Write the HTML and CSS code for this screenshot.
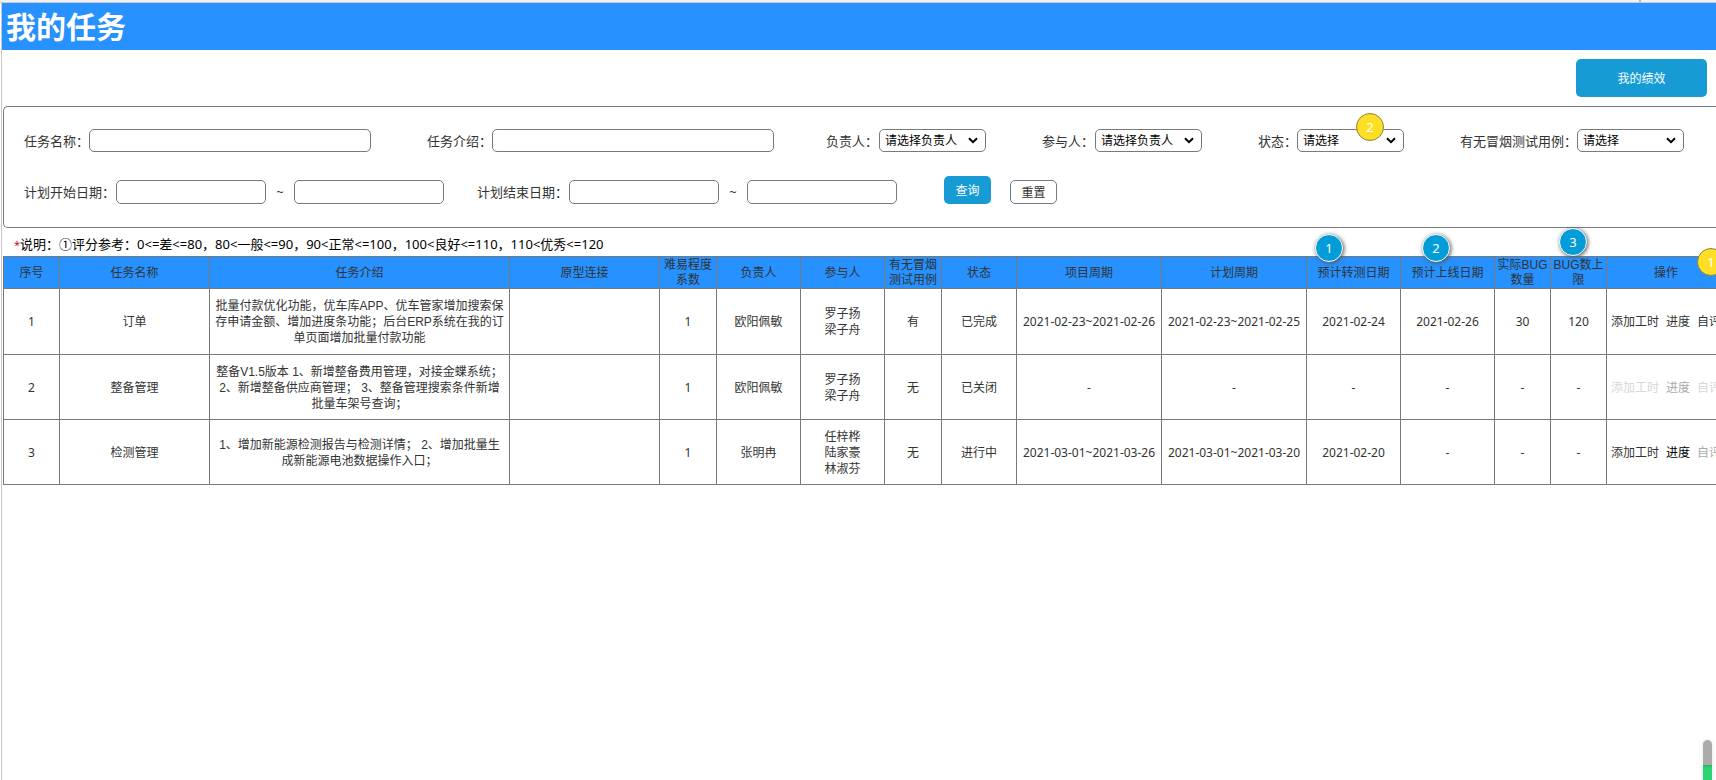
FILE: index.html
```html
<!DOCTYPE html>
<html lang="zh-CN">
<head>
<meta charset="utf-8">
<title>我的任务</title>
<link rel="stylesheet" href="styles.css">
</head>
<body>
<div class="top-strip"><span class="top-mark"></span></div>
<div class="page">
  <header class="page-header"><h1 class="page-title">我的任务</h1></header>
  <div class="toolbar"><button class="btn btn-large" type="button">我的绩效</button></div>

  <form class="filters">
    <div class="filter-row">
      <div class="filter-group">
        <div class="field"><label for="name">任务名称：</label><input class="input input-wide" id="name" type="text"></div>
        <div class="field"><label for="intro">任务介绍：</label><input class="input input-wide" id="intro" type="text"></div>
      </div>
      <div class="filter-group">
        <div class="field field-spaced"><label for="owner">负责人：</label><select class="select" id="owner"><option>请选择负责人</option></select></div>
        <div class="field field-spaced"><label for="member">参与人：</label><select class="select" id="member"><option>请选择负责人</option></select></div>
        <div class="field"><label for="state">状态：</label><select class="select" id="state"><option>请选择</option></select><span class="badge badge-yellow badge-state">2</span></div>
        <div class="field"><label for="smoke">有无冒烟测试用例：</label><select class="select" id="smoke"><option>请选择</option></select></div>
      </div>
    </div>
    <div class="filter-row filter-row-dates">
      <div class="field field-spaced"><label for="start-from">计划开始日期：</label><input class="input input-date" id="start-from" type="text"><span class="tilde">~</span><input class="input input-date" type="text" aria-label="计划开始日期止"></div>
      <div class="field field-spaced"><label for="end-from">计划结束日期：</label><input class="input input-date" id="end-from" type="text"><span class="tilde">~</span><input class="input input-date" type="text" aria-label="计划结束日期止"></div>
      <div class="filter-actions">
        <button class="btn btn-small" type="button">查询</button>
        <button class="btn btn-plain" type="reset">重置</button>
      </div>
    </div>
  </form>

  <p class="note"><span class="star">*</span>说明：①评分参考：0&lt;=差&lt;=80，80&lt;一般&lt;=90，90&lt;正常&lt;=100，100&lt;良好&lt;=110，110&lt;优秀&lt;=120</p>

  <table class="tasks">
    <colgroup>
      <col class="c-num"><col class="c-name"><col class="c-intro"><col class="c-name"><col class="c-short"><col class="c-person"><col class="c-person"><col class="c-short"><col class="c-state"><col class="c-period"><col class="c-period"><col class="c-date"><col class="c-date"><col class="c-num"><col class="c-num"><col class="c-ops">
    </colgroup>
    <thead>
      <tr>
        <th>序号</th><th>任务名称</th><th>任务介绍</th><th>原型连接</th><th>难易程度<br>系数</th><th>负责人</th><th>参与人</th><th>有无冒烟<br>测试用例</th><th>状态</th><th>项目周期</th><th>计划周期</th>
        <th>预计转测日期<span class="badge badge-blue badge-test">1</span></th>
        <th>预计上线日期<span class="badge badge-blue badge-online">2</span></th>
        <th>实际BUG<br>数量</th>
        <th>BUG数上<br>限<span class="badge badge-blue badge-limit">3</span></th>
        <th>操作<span class="badge badge-yellow badge-ops">1</span></th>
      </tr>
    </thead>
    <tbody>
      <tr>
        <td>1</td><td>订单</td><td class="intro">批量付款优化功能，优车库APP、优车管家增加搜索保<br>存申请金额、增加进度条功能；后台ERP系统在我的订<br>单页面增加批量付款功能</td><td></td><td>1</td><td>欧阳佩敏</td><td>罗子扬<br>梁子舟</td><td>有</td><td>已完成</td><td>2021-02-23~2021-02-26</td><td>2021-02-23~2021-02-25</td><td>2021-02-24</td><td>2021-02-26</td><td>30</td><td>120</td>
        <td><div class="ops"><a href="#">添加工时</a><a href="#">进度</a><a href="#">自评</a></div></td>
      </tr>
      <tr>
        <td>2</td><td>整备管理</td><td class="intro">整备V1.5版本 1、新增整备费用管理，对接金蝶系统；<br>2、新增整备供应商管理； 3、整备管理搜索条件新增<br>批量车架号查询；</td><td></td><td>1</td><td>欧阳佩敏</td><td>罗子扬<br>梁子舟</td><td>无</td><td>已关闭</td><td>-</td><td>-</td><td>-</td><td>-</td><td>-</td><td>-</td>
        <td><div class="ops"><a class="faint" href="#">添加工时</a><a class="muted" href="#">进度</a><a class="faint" href="#">自评</a></div></td>
      </tr>
      <tr>
        <td>3</td><td>检测管理</td><td class="intro">1、增加新能源检测报告与检测详情； 2、增加批量生<br>成新能源电池数据操作入口；</td><td></td><td>1</td><td>张明冉</td><td>任梓桦<br>陆家豪<br>林淑芬</td><td>无</td><td>进行中</td><td>2021-03-01~2021-03-26</td><td>2021-03-01~2021-03-20</td><td>2021-02-20</td><td>-</td><td>-</td><td>-</td>
        <td><div class="ops"><a href="#">添加工时</a><a class="strong" href="#">进度</a><a class="muted" href="#">自评</a></div></td>
      </tr>
    </tbody>
  </table>
</div>
<div class="scroll-thumb"></div>
</body>
</html>
```

FILE: styles.css
```css
* { box-sizing: border-box; }

body {
  margin: 0;
  min-height: 100vh;
  display: flex;
  flex-direction: column;
  position: relative;
  overflow: hidden;
  background: #fff;
  color: #333;
  font-family: "Noto Sans", "Noto Sans CJK SC", sans-serif;
  font-size: 12px;
  line-height: 16px;
}

button, input, select { font-family: inherit; font-size: 12px; }

.top-strip {
  display: flex;
  justify-content: flex-end;
  height: 3px;
  padding-right: 75px;
  background: #f1f1f1;
  border-bottom: 1px solid #c8ccd0;
}
.top-mark { width: 2px; background: #b4b8bc; }

.page {
  flex: 1;
  margin-left: 1px;
  border-left: 1px solid #c8c8c8;
}

.page-header {
  height: 47px;
  padding-left: 4px;
  background: #2691ff;
}
.page-title {
  margin: 0;
  color: #fff;
  font-size: 30px;
  line-height: 48px;
  font-weight: 700;
}

.toolbar {
  display: flex;
  justify-content: flex-end;
  padding: 9px 9px;
}

.btn {
  border: 0;
  border-radius: 5px;
  padding: 2px 0 0;
  background: #169bd5;
  color: #fff;
  line-height: 16px;
}
.btn-large { width: 131px; height: 38px; }
.btn-small { width: 47px; height: 28px; }
.btn-plain {
  width: 47px;
  height: 24px;
  border: 1px solid #797979;
  background: #fff;
  color: #333;
}

.filters {
  margin-left: 1px;
  padding: 22px 0 23px 20px;
  border: 1px solid #797979;
  border-right: 0;
  border-radius: 5px 0 0 5px;
  font-size: 13px;
}
.filter-row { display: flex; gap: 52px; }
.filter-row-dates {
  gap: 33px;
  align-items: flex-end;
  margin-top: 24px;
}
.filter-group { display: flex; gap: 56px; }
.field {
  display: flex;
  align-items: center;
  position: relative;
  white-space: nowrap;
}
.field-spaced label { margin-right: 1px; }
.input, .select {
  border: 1px solid #797979;
  border-radius: 5px;
  background: #fff;
  color: #000;
}
.input { padding: 0 6px; }
.input-wide { width: 282px; height: 23px; }
.input-date { width: 150px; height: 24px; }
.select {
  appearance: none;
  width: 107px;
  height: 23px;
  padding: 0 20px 0 5px;
  background: #fff url("data:image/svg+xml,%3Csvg xmlns='http://www.w3.org/2000/svg' width='10' height='7'%3E%3Cpath d='M1 1.2l4 4 4-4' fill='none' stroke='black' stroke-width='2'/%3E%3C/svg%3E") no-repeat right 7px center;
}
.tilde { width: 28px; text-align: center; }
.filter-actions {
  display: flex;
  align-items: flex-end;
  gap: 19px;
  margin-left: 14px;
}

.note {
  margin: 0;
  padding: 8px 0 3px 12px;
  color: #000;
  font-size: 13px;
}
.star { color: #d9001b; font-size: 11px; }

.tasks {
  width: 1723px;
  margin-left: 1px;
  border-collapse: collapse;
  table-layout: fixed;
  text-align: center;
}
.tasks th, .tasks td {
  height: 65px;
  padding: 1px 0 0;
  border: 1px solid #797979;
  font-weight: 400;
  white-space: nowrap;
}
.tasks tbody tr:first-child td { height: 66px; }
.tasks th {
  position: relative;
  height: 32px;
  line-height: 15px;
  background: #2691ff;
}
.tasks th, .tasks .intro {
  font-family: "Liberation Sans", "Noto Sans CJK SC", sans-serif;
}
.c-num { width: 56px; }
.c-name { width: 150px; }
.c-intro { width: 300px; }
.c-short { width: 57px; }
.c-person { width: 84px; }
.c-state { width: 75px; }
.c-period { width: 145px; }
.c-date { width: 94px; }
.c-ops { width: 119px; }

.ops { display: flex; justify-content: center; gap: 7px; }
.ops a { color: #333; text-decoration: none; }
.ops .faint { color: #d7d7d7; }
.ops .muted { color: #aaa; }
.ops .strong { color: #000; }

.badge {
  position: absolute;
  width: 28px;
  height: 28px;
  border-radius: 50%;
  color: #fff;
  font-family: "Noto Sans", sans-serif;
  font-size: 13px;
  line-height: 26px;
  text-align: center;
}
.badge-yellow { background: #ffdf25; border: 1px solid #8c8240; }
.badge-blue {
  background: #029dd9;
  border: 1px solid #fff;
  box-shadow: 1px 1px 4px #555;
}
.badge-state { right: 20px; top: -16px; }
.badge-test { left: 8px; top: -23px; }
.badge-online { left: 21px; top: -23px; }
.badge-limit { left: 8px; top: -29px; }
.badge-ops { right: 0; top: -9px; }

.scroll-thumb {
  position: absolute;
  right: 4px;
  bottom: 0;
  width: 9px;
  height: 40px;
  border-radius: 5px 5px 0 0;
  background: linear-gradient(#ababab 25px, #27b763 25px, #2bd475 28px);
  box-shadow: 0 0 5px #e4e4e4;
}
```
